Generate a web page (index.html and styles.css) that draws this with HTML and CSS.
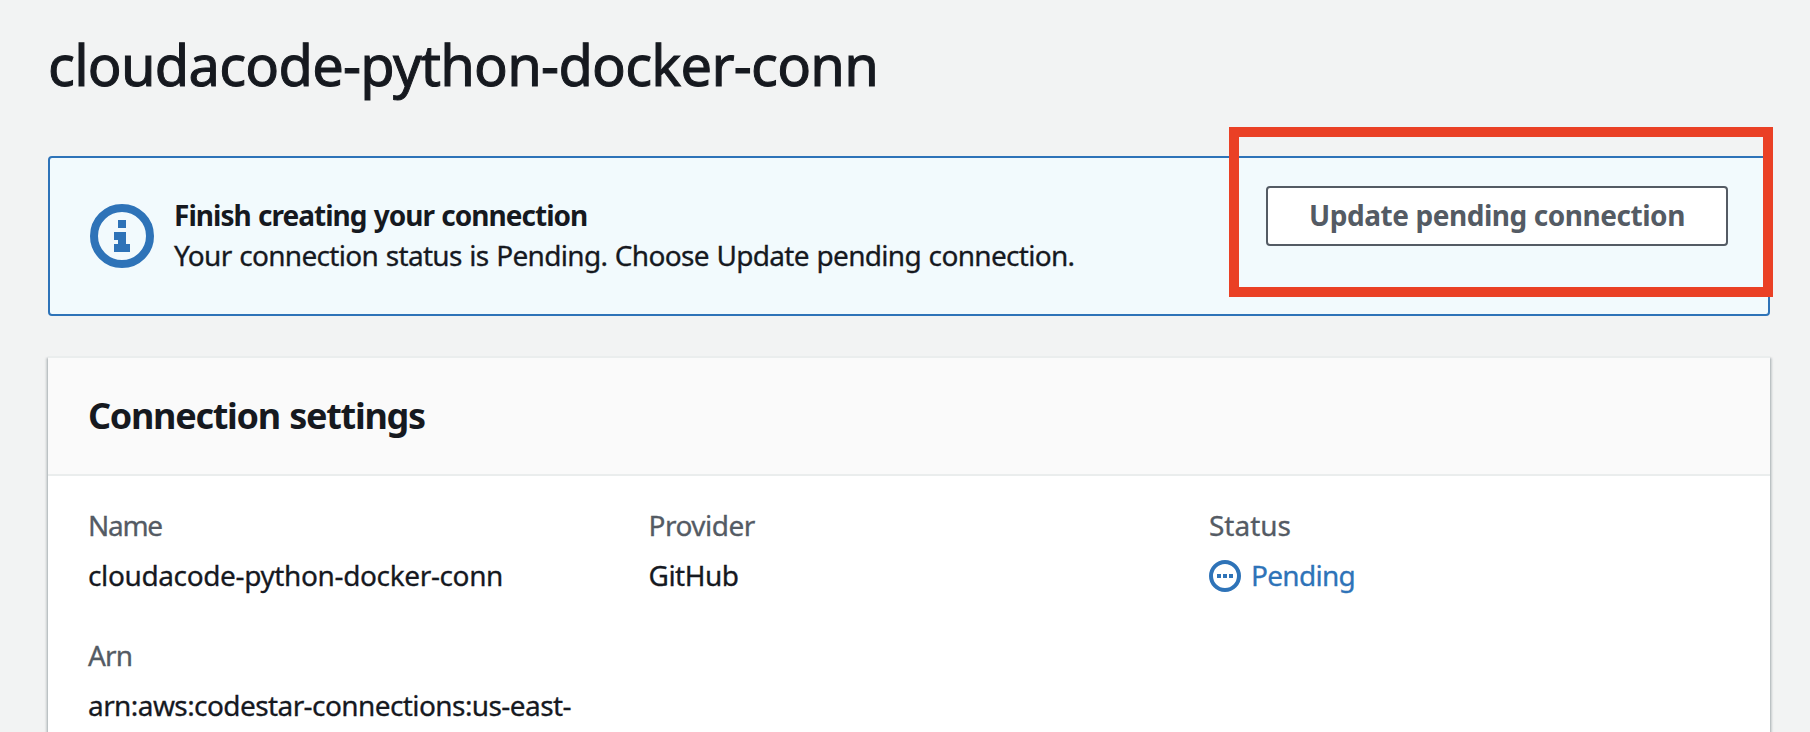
FILE: index.html
```html
<!DOCTYPE html>
<html lang="en">
<head>
<meta charset="utf-8">
<title>cloudacode-python-docker-conn</title>
<link rel="stylesheet" href="styles.css">
</head>
<body>
<main class="page">
  <h1 class="title">cloudacode-python-docker-conn</h1>
  <section class="alert">
    <svg class="alert-icon" viewBox="0 0 64 64"><circle cx="32" cy="32" r="28" fill="none" stroke="currentColor" stroke-width="8"/><path fill="currentColor" d="M28 16h8v8h-8zM24 28h12v12h4v8H24v-8h4v-4h-4z"/></svg>
    <div class="alert-text">
      <div class="alert-heading">Finish creating your connection</div>
      <div class="alert-body">Your connection status is Pending. Choose Update pending connection.</div>
    </div>
    <button class="button" type="button">Update pending connection</button>
    <div class="highlight"></div>
  </section>
  <section class="panel">
    <header class="panel-header"><h2 class="panel-title">Connection settings</h2></header>
    <div class="fields">
      <div class="field"><div class="label label-name">Name</div><div class="value">cloudacode-python-docker-conn</div></div>
      <div class="field"><div class="label label-provider">Provider</div><div class="value value-provider">GitHub</div></div>
      <div class="field"><div class="label label-status">Status</div><div class="value status">
        <svg class="status-icon" viewBox="0 0 32 32"><circle cx="16" cy="16" r="14" fill="none" stroke="currentColor" stroke-width="4"/><path fill="currentColor" d="M8 14h4v4H8zM14 14h4v4h-4zM20 14h4v4h-4z"/></svg><span>Pending</span></div></div>
      <div class="field"><div class="label label-arn">Arn</div><div class="value value-arn">arn:aws:codestar-connections:us-east-</div></div>
    </div>
  </section>
</main>
</body>
</html>
```
FILE: styles.css
```css
* { box-sizing: border-box; }
body { margin: 0; background: #f2f3f3; color: #16191f; font: 28px/40px "Noto Sans", sans-serif; letter-spacing: -.37px; -webkit-text-stroke: .3px; }
.page { height: 732px; overflow: hidden; padding: 28px 40px 0 48px; }
.title { margin: 0; font-size: 56px; font-weight: 400; line-height: 72px; height: 128px; white-space: nowrap; letter-spacing: -.74px; -webkit-text-stroke: 1px; }
.alert { position: relative; display: flex; align-items: flex-start; height: 160px; border: 2px solid #2e73b8; border-radius: 4px; background: #f2fafd; padding: 28px 40px; }
.alert-icon { width: 64px; height: 64px; margin-top: 18px; color: #2e73b8; flex: none; }
.alert-text { flex: 1; margin: 9px 0 0 20px; white-space: nowrap; }
.alert-heading { font-weight: 700; letter-spacing: -.98px; word-spacing: 1px; -webkit-text-stroke: 0; }
.alert-body { letter-spacing: -.68px; word-spacing: 1px; }
.button { width: 462px; height: 60px; border: 2px solid #545b64; border-radius: 4px; background: #fff; color: #545b64; font: 700 28px/40px "Noto Sans", sans-serif; letter-spacing: -.45px; padding: 7px 0 9px; white-space: nowrap; -webkit-text-stroke: 0; }
.highlight { position: absolute; left: 1179px; top: -31px; width: 544px; height: 170px; border: 10px solid #ea4025; }
.panel { margin-top: 40px; background: #fff; border-top: 2px solid #eaeded; box-shadow: 0 2px 2px rgba(0,28,36,.3), 2px 2px 2px rgba(0,28,36,.15), -2px 2px 2px rgba(0,28,36,.15); }
.panel-header { height: 118px; background: #fafafa; border-bottom: 2px solid #eaeded; padding: 36px 40px; }
.panel-title { margin: 0; font-size: 36px; line-height: 44px; font-weight: 700; letter-spacing: -1.3px; word-spacing: 1.5px; -webkit-text-stroke: 0; }
.fields { display: grid; grid-template-columns: repeat(3, 560.5px); row-gap: 40px; padding: 29px 0 60px 40px; white-space: nowrap; }
.label { color: #545b64; margin-bottom: 10px; }
.label-name { letter-spacing: -1.3px; }
.label-provider, .value-provider { letter-spacing: -.5px; }
.label-status { letter-spacing: 0; }
.label-arn { letter-spacing: -.8px; }
.value-arn { letter-spacing: -.58px; }
.status { display: flex; align-items: center; gap: 10px; color: #2e73b8; letter-spacing: -.7px; }
.status-icon { width: 32px; height: 32px; margin-top: 2px; }
```
